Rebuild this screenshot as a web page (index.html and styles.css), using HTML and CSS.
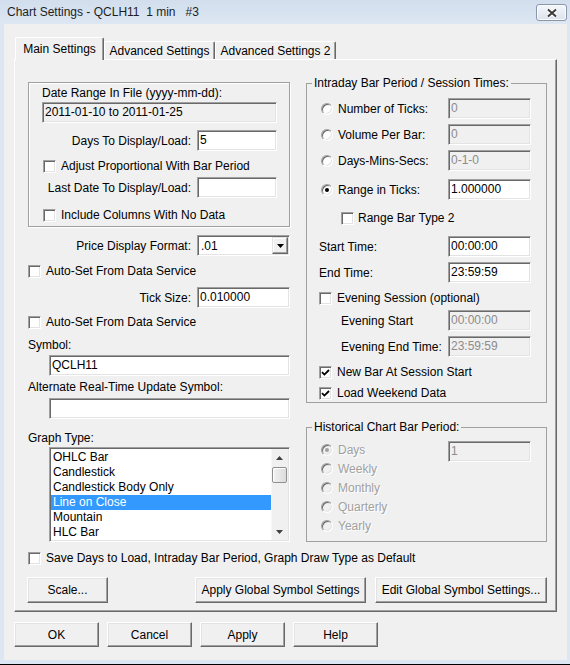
FILE: index.html
```html
<!DOCTYPE html>
<html lang="en">
<head>
	<meta charset="UTF-8">
	<title>Chart Settings</title>
	<link rel="stylesheet" href="styles.css">
</head>
<body>
	<div class="dialog">
		<div class="titlebar">
			<span class="title">Chart Settings - QCLH11&nbsp; 1 min &nbsp; #3</span>
			<span class="close">
				<svg width="12" height="10" viewBox="0 0 12 10">
					<path d="M2 1.5 L10 8.5 M10 1.5 L2 8.5" stroke="#fff" stroke-width="4"/>
					<path d="M2 1.5 L10 8.5 M10 1.5 L2 8.5" stroke="#3b3b3b" stroke-width="2"/>
				</svg>
			</span>
		</div>
		<div class="client">
			<ul class="tabs">
				<li class="active">Main Settings</li>
				<li class="t2">Advanced Settings</li>
				<li class="t3">Advanced Settings 2</li>
			</ul>
			<div class="panel">
				<div class="columns">
					<!-- left column -->
					<div class="col-left">
						<div class="group">
							<div class="caption">Date Range In File (yyyy-mm-dd):</div>
							<div class="edit readonly range">2011-01-10 to 2011-01-25</div>
							<div class="row days"><span>Days To Display/Load:</span><div class="edit short">5</div></div>
							<label class="check adjust"><span class="box"></span>Adjust Proportional With Bar Period</label>
							<div class="row last"><span>Last Date To Display/Load:</span><div class="edit short"></div></div>
							<label class="check include"><span class="box"></span>Include Columns With No Data</label>
						</div>
						<div class="row price">
							<span>Price Display Format:</span>
							<div class="combo">
								<span class="combo-text">.01</span>
								<span class="combo-btn"><svg width="7" height="4" viewBox="0 0 7 4"><path d="M0 0 H7 L3.5 4 Z" fill="#000"/></svg></span>
							</div>
						</div>
						<label class="check auto1"><span class="box"></span>Auto-Set From Data Service</label>
						<div class="row tick"><span>Tick Size:</span><div class="edit mid">0.010000</div></div>
						<label class="check auto2"><span class="box"></span>Auto-Set From Data Service</label>
						<div class="caption symbol-cap">Symbol:</div>
						<div class="edit long symbol">QCLH11</div>
						<div class="caption alt-cap">Alternate Real-Time Update Symbol:</div>
						<div class="edit long alt"></div>
						<div class="caption graph-cap">Graph Type:</div>
						<div class="listbox">
							<div class="items">
								<div>OHLC Bar</div>
								<div>Candlestick</div>
								<div>Candlestick Body Only</div>
								<div class="sel">Line on Close</div>
								<div>Mountain</div>
								<div>HLC Bar</div>
							</div>
							<div class="scroll">
								<span class="arrow"><svg width="7" height="4" viewBox="0 0 7 4"><path d="M0 4 H7 L3.5 0 Z" fill="#404040"/></svg></span>
								<span class="thumb"></span>
								<span class="track"></span>
								<span class="arrow"><svg width="7" height="4" viewBox="0 0 7 4"><path d="M0 0 H7 L3.5 4 Z" fill="#404040"/></svg></span>
							</div>
						</div>
					</div>

					<!-- right column -->
					<div class="col-right">
						<fieldset class="frame intraday">
							<legend>Intraday Bar Period / Session Times:</legend>
							<div class="opt">
								<span class="lbl"><span class="radio"></span>Number of Ticks:</span>
								<div class="edit time off">0</div>
							</div>
							<div class="opt">
								<span class="lbl"><span class="radio"></span>Volume Per Bar:</span>
								<div class="edit time off">0</div>
							</div>
							<div class="opt">
								<span class="lbl"><span class="radio"></span>Days-Mins-Secs:</span>
								<div class="edit time off">0-1-0</div>
							</div>
							<div class="opt ticks">
								<span class="lbl"><span class="radio on"></span>Range in Ticks:</span>
								<div class="edit time">1.000000</div>
							</div>
							<label class="check rangebar"><span class="box"></span>Range Bar Type 2</label>
							<div class="line start">
								<span class="lbl">Start Time:</span>
								<div class="edit time">00:00:00</div>
							</div>
							<div class="line">
								<span class="lbl">End Time:</span>
								<div class="edit time">23:59:59</div>
							</div>
							<label class="check evening"><span class="box"></span>Evening Session (optional)</label>
							<div class="line sub">
								<span class="lbl">Evening Start</span>
								<div class="edit time off">00:00:00</div>
							</div>
							<div class="line sub">
								<span class="lbl">Evening End Time:</span>
								<div class="edit time off">23:59:59</div>
							</div>
							<label class="check newbar"><span class="box"><svg width="9" height="9" viewBox="0 0 9 9"><path d="M1 4.2 L3.4 6.6 L8 2" fill="none" stroke="#000" stroke-width="1.8"/></svg></span>New Bar At Session Start</label>
							<label class="check weekend"><span class="box"><svg width="9" height="9" viewBox="0 0 9 9"><path d="M1 4.2 L3.4 6.6 L8 2" fill="none" stroke="#000" stroke-width="1.8"/></svg></span>Load Weekend Data</label>
						</fieldset>

						<fieldset class="frame history">
							<legend>Historical Chart Bar Period:</legend>
							<div class="hist-body">
								<div class="radios">
									<div><span class="radio off on"></span>Days</div>
									<div><span class="radio off"></span>Weekly</div>
									<div><span class="radio off"></span>Monthly</div>
									<div><span class="radio off"></span>Quarterly</div>
									<div><span class="radio off"></span>Yearly</div>
								</div>
								<div class="edit time off">1</div>
							</div>
						</fieldset>
					</div>
				</div>

				<label class="check save"><span class="box"></span>Save Days to Load, Intraday Bar Period, Graph Draw Type as Default</label>

				<div class="panel-buttons">
					<span class="btn scale">Scale...</span>
					<span class="btn apply-global">Apply Global Symbol Settings</span>
					<span class="btn edit-global">Edit Global Symbol Settings...</span>
				</div>
			</div>

			<div class="dialog-buttons">
				<span class="btn">OK</span>
				<span class="btn">Cancel</span>
				<span class="btn">Apply</span>
				<span class="btn">Help</span>
			</div>
		</div>
	</div>
</body>
</html>
```

FILE: styles.css
```css
body{
	margin:0;
	font-family:"Liberation Sans", Arial, sans-serif;
	font-size:12px;
	color:#000;
}
ul,li{
	margin:0;
	padding:0;
	list-style:none;
}

/* window frame */
.dialog{
	display:flex;
	flex-direction:column;
	box-sizing:border-box;
	width:570px;
	height:665px;
	padding:0 3px 4px 4px;
	background:#dde7f3;
	border-bottom:1px solid #000;
}
.titlebar{
	display:flex;
	justify-content:space-between;
	align-items:flex-start;
	height:24px;
	margin:0 -3px 0 -4px;
	padding:0 3px 0 7px;
	background:linear-gradient(#d2deed,#dde7f3);
}
.title{
	margin-top:5px;
	line-height:15px;
	color:#1e1e1e;
}
.close{
	display:flex;
	align-items:center;
	justify-content:center;
	box-sizing:border-box;
	width:31px;
	height:17px;
	margin-top:4px;
	border:1px solid #8a97ab;
	border-radius:3px;
	background:linear-gradient(#f5f7fb,#dce3ed);
	box-shadow:inset 0 0 0 1px #fafbfd;
}
.client{
	flex:1;
	padding-top:13px;
	background:#f0f0f0;
}

/* tabs */
.tabs{
	display:flex;
	align-items:flex-end;
	height:22px;
	margin-left:11px;
}
.tabs li{
	box-sizing:border-box;
	height:18px;
	padding-top:2px;
	line-height:14px;
	text-align:center;
	border-top:1px solid #fff;
	border-left:1px solid #fff;
	border-right:1px solid #696969;
	border-radius:2px 2px 0 0;
	box-shadow:inset -1px 0 #a0a0a0;
	background:#f0f0f0;
}
.tabs li.active{
	position:relative;
	z-index:1;
	width:89px;
	height:23px;
	margin-bottom:-1px;
	padding-top:4px;
}
.tabs .t2{
	width:111px;
}
.tabs .t3{
	width:121px;
}
.panel{
	width:543px;
	box-sizing:border-box;
	margin-left:10px;
	padding:22px 9px 8px 13px;
	border:1px solid;
	border-color:#fff #696969 #696969 #fff;
	box-shadow:inset -1px -1px #a0a0a0;
}
.columns{
	display:flex;
	gap:16px;
}
.col-left{
	width:262px;
}
.col-right{
	width:241px;
	margin-top:-6px;
}

/* common controls */
.caption{
	line-height:14px;
}
.edit{
	box-sizing:border-box;
	height:21px;
	padding:0 2px;
	line-height:19px;
	white-space:nowrap;
	overflow:hidden;
	background:#fff;
	border:1px solid;
	border-color:#a0a0a0 #fff #fff #a0a0a0;
	box-shadow:inset 1px 1px #696969, inset -1px -1px #e3e3e3;
}
.edit.readonly{
	background:#f0f0f0;
}
.edit.off{
	background:#f0f0f0;
	color:#8c8c8c;
}
.row{
	display:flex;
	align-items:center;
	justify-content:flex-end;
	gap:6px;
	height:21px;
}
.check{
	display:flex;
	align-items:center;
	gap:5px;
	height:14px;
	line-height:14px;
	white-space:nowrap;
}
.box{
	display:flex;
	align-items:center;
	justify-content:center;
	flex:none;
	box-sizing:border-box;
	width:13px;
	height:13px;
	background:#fff;
	border:1px solid;
	border-color:#a0a0a0 #fff #fff #a0a0a0;
	box-shadow:inset 1px 1px #696969, inset -1px -1px #e3e3e3;
}
.radio{
	display:flex;
	align-items:center;
	justify-content:center;
	flex:none;
	box-sizing:border-box;
	width:12px;
	height:12px;
	border-radius:50%;
	background:#fff;
	border:1px solid;
	border-color:#a0a0a0 #fff #fff #a0a0a0;
	box-shadow:inset 1px 1px #696969, inset -1px -1px #e3e3e3;
}
.radio.on::after{
	content:'';
	width:4px;
	height:4px;
	border-radius:50%;
	background:#000;
}
.radio.off{
	background:#f0f0f0;
}
.radio.off.on::after{
	background:#a0a0a0;
}
.btn{
	display:flex;
	align-items:center;
	justify-content:center;
	box-sizing:border-box;
	height:26px;
	background:#f0f0f0;
	border:1px solid;
	border-color:#fff #696969 #696969 #fff;
	box-shadow:inset -1px -1px #a0a0a0, inset 1px 1px #e3e3e3;
	white-space:nowrap;
}

/* date range group */
.group{
	height:145px;
	box-sizing:border-box;
	padding:3px 12px 0 13px;
	border:1px solid #a0a0a0;
	box-shadow:inset 1px 1px #fff, 1px 1px #fff;
}
.range{
	margin-top:2px;
}
.short{
	width:80px;
}
.group .days{
	margin-top:7px;
}
.group .check{
	margin-left:1px;
}
.adjust{
	margin-top:8px;
}
.group .last{
	margin-top:4px;
}
.include{
	margin-top:10px;
}

/* left column below the group */
.price{
	margin-top:8px;
}
.combo{
	display:flex;
	align-items:center;
	box-sizing:border-box;
	width:93px;
	height:21px;
	padding:1px;
	background:#fff;
	border:1px solid;
	border-color:#a0a0a0 #fff #fff #a0a0a0;
	box-shadow:inset 1px 1px #696969, inset -1px -1px #e3e3e3;
}
.combo-text{
	flex:1;
	padding-left:2px;
}
.combo-btn{
	display:flex;
	align-items:center;
	justify-content:center;
	box-sizing:border-box;
	width:16px;
	height:17px;
	background:#f0f0f0;
	border:1px solid;
	border-color:#e3e3e3 #696969 #696969 #e3e3e3;
	box-shadow:inset -1px -1px #a0a0a0, inset 1px 1px #fff;
}
.auto1{
	margin-top:8px;
}
.tick{
	margin-top:9px;
}
.mid{
	width:93px;
}
.auto2{
	margin-top:7px;
}
.symbol-cap{
	margin-top:9px;
}
.long{
	width:241px;
	margin-left:21px;
}
.symbol{
	margin-top:3px;
}
.alt-cap{
	margin-top:4px;
}
.alt{
	margin-top:4px;
}
.graph-cap{
	margin-top:12px;
}

/* graph type list */
.listbox{
	display:flex;
	box-sizing:border-box;
	width:241px;
	height:95px;
	margin:2px 0 0 21px;
	background:#fff;
	border:1px solid;
	border-color:#a0a0a0 #fff #fff #a0a0a0;
	box-shadow:inset 1px 1px #696969, inset -1px -1px #e3e3e3;
	padding:1px;
}
.items{
	flex:1;
	padding-top:1px;
}
.items div{
	height:15px;
	line-height:15px;
	padding-left:2px;
}
.items .sel{
	background:#3399ff;
	color:#fff;
}
.scroll{
	display:flex;
	flex-direction:column;
	width:17px;
	background:#f0f0f0;
	box-shadow:inset 1px 0 #f7f7f7;
}
.scroll .arrow{
	display:flex;
	align-items:center;
	justify-content:center;
	height:17px;
}
.scroll .thumb{
	box-sizing:border-box;
	height:16px;
	width:15px;
	margin:1px 0 0 1px;
	border:1px solid #8f8f8f;
	border-radius:2px;
	background:linear-gradient(90deg,#f2f2f2,#dcdcdc);
	box-shadow:inset 1px 1px #fff;
}
.scroll .track{
	flex:1;
}

/* right column */
.frame{
	margin:0;
	min-width:0;
	padding:8px 15px 2px 5px;
	border:1px solid #a0a0a0;
}
.frame legend{
	padding:0 2px;
	line-height:14px;
}
.opt{
	display:flex;
	align-items:center;
	height:21px;
	margin:5px 0 0 9px;
}
.opt:first-of-type{
	margin-top:0;
}
.opt .lbl{
	display:flex;
	align-items:center;
	gap:5px;
	width:127px;
}
.opt.ticks{
	margin-top:8px;
}
.time{
	width:83px;
}
.intraday .check{
	margin:8px 0 0 7px;
}
.intraday .rangebar{
	margin:11px 0 0 29px;
	gap:4px;
}
.line{
	display:flex;
	align-items:center;
	height:21px;
	margin:5px 0 0 7px;
}
.line.start{
	margin-top:11px;
}
.line .lbl{
	width:129px;
}
.line.sub .lbl{
	width:107px;
	margin-left:22px;
}
.intraday .weekend{
	margin-top:7px;
}
.history{
	margin-top:17px;
	padding:6px 15px 6px 5px;
}
.hist-body{
	display:flex;
	justify-content:space-between;
	margin-left:9px;
}
.radios div{
	display:flex;
	align-items:center;
	gap:5px;
	height:19px;
	color:#a0a0a0;
	text-shadow:1px 1px 0 #fff;
}
.hist-body .edit{
	margin-top:1px;
}

/* bottom of the tab page */
.save{
	margin-top:9px;
}
.panel-buttons{
	display:flex;
	margin-top:12px;
}
.scale{
	width:81px;
	margin-left:-1px;
}
.apply-global{
	width:171px;
	margin-left:auto;
}
.edit-global{
	width:172px;
	margin-left:9px;
}
.dialog-buttons{
	display:flex;
	gap:8px;
	margin:10px 0 0 10px;
}
.dialog-buttons .btn{
	width:85px;
	height:25px;
}
```
